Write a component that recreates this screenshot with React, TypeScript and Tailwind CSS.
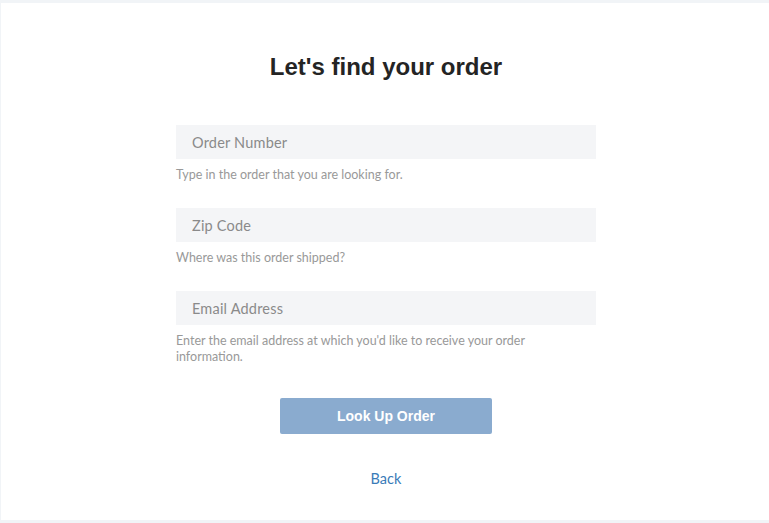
export default function App() {
  const fields = [
    { placeholder: "Order Number", help: "Type in the order that you are looking for." },
    { placeholder: "Zip Code", help: "Where was this order shipped?" },
    { placeholder: "Email Address", help: "Enter the email address at which you'd like to receive your order information." },
  ];

  return (
    <div className="min-h-[523px] bg-[#f1f4f7] pt-[3px] pb-[3px] pl-[1px]">
      <div className="flex h-[517px] flex-col items-center bg-white pl-[2px] font-['Lato',sans-serif]">
        <h1 className="mt-[50px] font-['Liberation_Sans',Arial,sans-serif] text-[24px] font-bold leading-[28px] text-[#242424]">
          Let's find your order
        </h1>

        <form className="mt-[44px] flex w-[420px] flex-col" onSubmit={(e) => e.preventDefault()}>
          {fields.map((f) => (
            <div key={f.placeholder} className="mb-[25px]">
              <input
                type="text"
                placeholder={f.placeholder}
                className="h-[34px] w-full bg-[#f4f5f7] px-4 text-[14.5px] tracking-[0.2px] text-[#555] outline-none placeholder:text-[#8a8a8a]"
              />
              <p className="mt-[8px] max-w-[400px] text-[12.5px] leading-[16px] text-[#999]">{f.help}</p>
            </div>
          ))}

          <button
            type="submit"
            className="mx-auto mt-[8px] h-[36px] w-[212px] rounded-[2px] bg-[#8aabcf] font-['Liberation_Sans',Arial,sans-serif] text-[14px] font-bold text-white"
          >
            Look Up Order
          </button>
        </form>

        <a href="#" className="mt-[35px] text-[14.5px] leading-[20px] text-[#3a7bb8]">
          Back
        </a>
      </div>
    </div>
  );
}
